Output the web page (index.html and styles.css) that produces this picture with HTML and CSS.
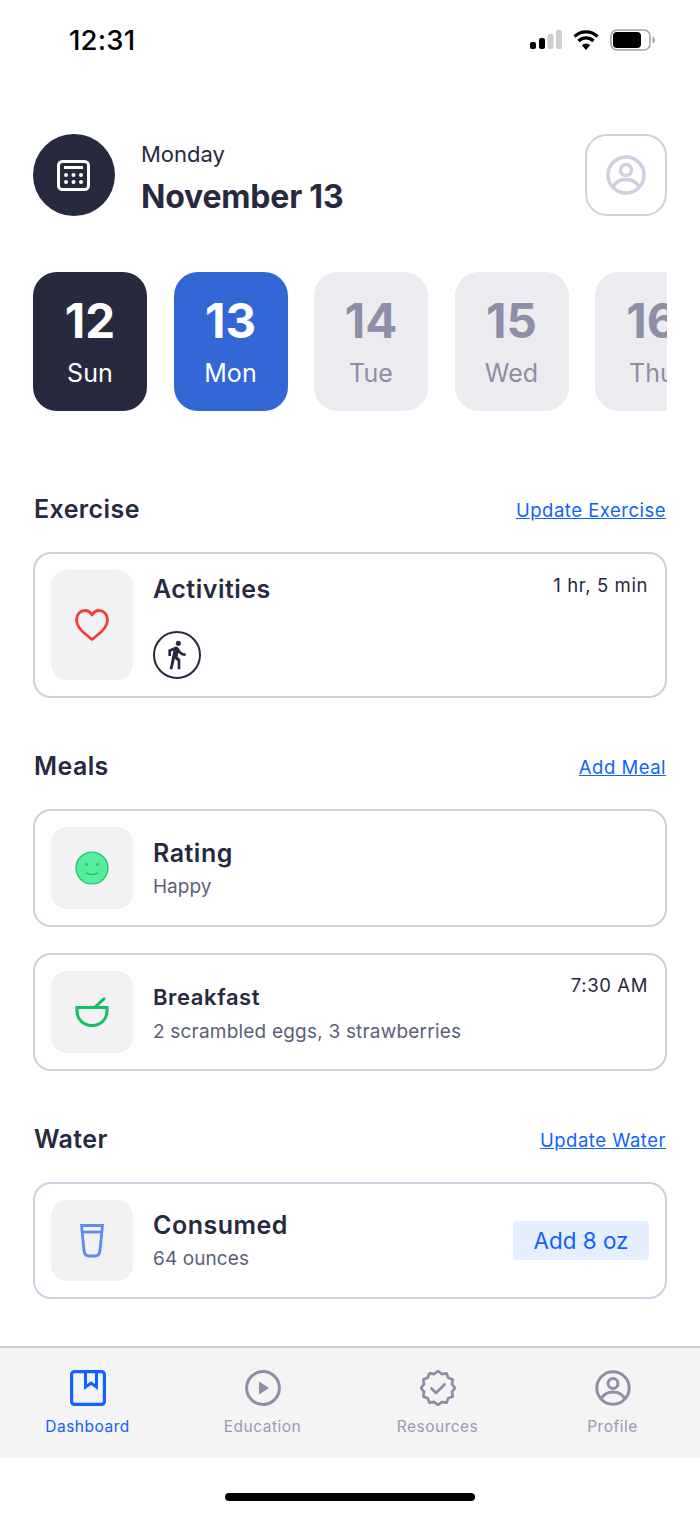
FILE: index.html
```html
<!DOCTYPE html>
<html lang="en">
<head>
<meta charset="utf-8">
<title>Dashboard</title>
<link rel="stylesheet" href="styles.css">
</head>
<body>
<div class="status">
  <span class="clock">12:31</span>
  <div class="status-icons">
    <svg class="i-signal" width="32" height="20" viewBox="0 0 32 20"><rect x="0" y="12" width="6" height="7" rx="2"/><rect x="9" y="8" width="6" height="11" rx="2"/><rect class="off" x="17.500" y="4" width="6" height="15" rx="2"/><rect class="off" x="26" y="0" width="6" height="19" rx="2"/></svg>
    <svg class="i-wifi" width="26" height="20" viewBox="0 0 26 20"><path d="M1.500 6.500a16.500 16.500 0 0 1 23 0M5.500 11a10.800 10.800 0 0 1 15 0" fill="none" stroke="#000" stroke-width="3.200"/><path d="M13 20 8.800 15.300a6 6 0 0 1 8.400 0z"/></svg>
    <svg class="i-battery" width="45" height="22" viewBox="0 0 45 22"><rect x="1" y="1" width="39" height="20" rx="6" fill="none" stroke="#a4a4a4" stroke-width="1.600"/><rect x="3" y="3" width="28" height="16" rx="4"/><path d="M42.500 7.500c1.500.5 2.500 2 2.500 3.500s-1 3-2.500 3.500z" fill="#a4a4a4"/></svg>
  </div>
</div>

<main class="main">
  <header class="top">
    <div class="round-icon">
      <svg width="36" height="36" viewBox="0 0 36 36" fill="none"><rect x="2.500" y="4.500" width="30" height="28" rx="4" stroke="#fff" stroke-width="3"/><rect x="8" y="9" width="19" height="3" fill="#fff"/><g fill="#fff"><circle cx="10" cy="18" r="2"/><circle cx="17.500" cy="18" r="2"/><circle cx="25" cy="18" r="2"/><circle cx="10" cy="25" r="2"/><circle cx="17.500" cy="25" r="2"/><circle cx="25" cy="25" r="2"/></g></svg>
    </div>
    <div class="top-text">
      <div class="weekday">Monday</div>
      <div class="date">November 13</div>
    </div>
    <div class="avatar-btn">
      <svg width="40" height="40" viewBox="0 0 40 40" fill="none" stroke="#cfcfe0" stroke-width="3.500"><circle cx="20" cy="20" r="18"/><circle cx="20" cy="15" r="5.500"/><path d="M7 32c2.500-5 7.500-7.500 13-7.500S30.500 27 33 32"/></svg>
    </div>
  </header>

  <div class="days">
    <div class="day day-dark"><b>12</b><span>Sun</span></div>
    <div class="day day-blue"><b>13</b><span>Mon</span></div>
    <div class="day"><b>14</b><span>Tue</span></div>
    <div class="day"><b>15</b><span>Wed</span></div>
    <div class="day"><b>16</b><span>Thu</span></div>
  </div>

  <section class="section section-first">
    <div class="sec-head"><h2>Exercise</h2><a href="#">Update Exercise</a></div>
    <div class="card">
      <div class="icon-box icon-tall">
        <svg width="36" height="34" viewBox="0 0 36 34" fill="none"><path d="M18 31.500C11 26 2.500 20 2.500 11.500 2.500 6 6.500 2.500 10.800 2.500c3 0 5.600 1.700 7.200 4.500 1.600-2.800 4.200-4.500 7.200-4.500 4.300 0 8.300 3.500 8.300 9 0 8.500-8.500 14.500-15.500 20z" stroke="#f24040" stroke-width="2.800" stroke-linejoin="round"/></svg>
      </div>
      <div class="card-body card-activities">
        <div class="title">Activities</div>
        <div class="walk">
          <svg width="26" height="30" viewBox="5 1 15 22.500" fill="#272a3e"><path d="M13.500 5.500c1.100 0 2-.9 2-2s-.9-2-2-2-2 .9-2 2 .9 2 2 2zM9.800 8.900L7 23h2.100l1.800-8 2.100 2v6h2v-7.500l-2.100-2 .6-3C14.800 12 16.800 13 19 13v-2c-1.900 0-3.500-1-4.300-2.400l-1-1.600c-.4-.6-1-1-1.700-1-.3 0-.5.1-.8.1L6 8.300V13h2V9.600l1.800-.7"/></svg>
        </div>
      </div>
      <div class="meta meta-activities">1 hr, 5 min</div>
    </div>
  </section>

  <section class="section">
    <div class="sec-head"><h2>Meals</h2><a href="#">Add Meal</a></div>
    <div class="card">
      <div class="icon-box">
        <svg width="34" height="34" viewBox="0 0 34 34"><circle cx="17" cy="17" r="16" fill="#55ec9d" stroke="#1cbc6a" stroke-width="1.200"/><circle cx="11.500" cy="13.500" r="1.300" fill="#1cbc6a"/><circle cx="22.500" cy="13.500" r="1.300" fill="#1cbc6a"/><path d="M11 22c3.500 1.800 8.500 1.800 12 0" fill="none" stroke="#1cbc6a" stroke-width="1.100" stroke-linecap="round"/></svg>
      </div>
      <div class="card-body">
        <div class="title title-rating">Rating</div>
        <div class="sub sub-rating">Happy</div>
      </div>
    </div>
    <div class="card card-next">
      <div class="icon-box">
        <svg width="34" height="30" viewBox="0 0 34 30" fill="none" stroke="#10c163" stroke-width="3"><path d="M2 10.500h30V14c0 8-6 14.500-15 14.500S2 22 2 14z"/><path d="M20 10 29 1.800" stroke-linecap="round"/></svg>
      </div>
      <div class="card-body">
        <div class="title title-small">Breakfast</div>
        <div class="sub sub-breakfast">2 scrambled eggs, 3 strawberries</div>
      </div>
      <div class="meta meta-breakfast">7:30 AM</div>
    </div>
  </section>

  <section class="section">
    <div class="sec-head"><h2>Water</h2><a href="#">Update Water</a></div>
    <div class="card card-center">
      <div class="icon-box icon-water">
        <svg width="24" height="34" viewBox="0 0 24 34" fill="none" stroke="#5b8def" stroke-width="2.800"><path d="M1.500 1.500h21l-2.500 25c-.3 3.200-2 5.500-5 5.500H9c-3 0-4.700-2.300-5-5.500z"/><path d="M2.200 8h19.600"/></svg>
      </div>
      <div class="card-body">
        <div class="title">Consumed</div>
        <div class="sub sub-water">64 ounces</div>
      </div>
      <button class="add-btn">Add 8 oz</button>
    </div>
  </section>
</main>

<nav class="tabs">
  <div class="tab tab-active">
    <svg width="36" height="36" viewBox="0 0 36 36" fill="none" stroke="#0f62fe" stroke-width="3.200"><rect x="1.600" y="1.600" width="32.800" height="32.800" rx="3"/><path d="M15.500 2v15l5.500-4 5.500 4V2" stroke-width="3"/></svg>
    <span>Dashboard</span>
  </div>
  <div class="tab">
    <svg width="36" height="36" viewBox="0 0 36 36" fill="none"><circle cx="18" cy="18" r="16.400" stroke="#8e8ea6" stroke-width="3"/><path d="M14 11.500v13l10-6.500z" fill="#8e8ea6"/></svg>
    <span>Education</span>
  </div>
  <div class="tab">
    <svg width="36" height="36" viewBox="0 0 36 36" fill="none" stroke="#8e8ea6" stroke-width="2.800" stroke-linejoin="round"><path d="M35 18 32 21.750 32.700 26.500 28.250 28.250 26.500 32.700 21.750 32 18 35 14.250 32 9.500 32.700 7.750 28.250 3.300 26.500 4 21.750 1 18 4 14.250 3.300 9.500 7.750 7.750 9.500 3.300 14.250 4 18 1 21.750 4 26.500 3.300 28.250 7.750 32.700 9.500 32 14.250z"/><path d="M11.500 18.500l4.500 4.500 8.500-8.500" stroke-linecap="round"/></svg>
    <span>Resources</span>
  </div>
  <div class="tab">
    <svg width="36" height="36" viewBox="0 0 40 40" fill="none" stroke="#8e8ea6" stroke-width="3.300"><circle cx="20" cy="20" r="18"/><circle cx="20" cy="15" r="5.500"/><path d="M7 32c2.500-5 7.500-7.500 13-7.500S30.500 27 33 32"/></svg>
    <span>Profile</span>
  </div>
</nav>
<div class="home"><div class="home-bar"></div></div>
</body>
</html>
```

FILE: styles.css
```css
* { box-sizing: border-box; }
html, body { margin: 0; padding: 0; }
body {
  width: 700px;
  height: 1517px;
  overflow: hidden;
  display: flex;
  flex-direction: column;
  background: #fff;
  color: #272a3e;
  font-family: Inter, "Liberation Sans", sans-serif;
}

.status {
  height: 80px;
  flex: none;
  display: flex;
  align-items: center;
  justify-content: space-between;
  padding: 0 45px 0 69px;
  color: #000;
}
.clock { font-size: 27.500px; font-weight: 500; letter-spacing: .2px; }
.status-icons { display: flex; align-items: center; gap: 11px; }
.status-icons svg { display: block; }
.off { fill: #cfcfcf; }

.main { flex: 1; padding: 54px 33px 0; min-height: 0; }

.top { display: flex; align-items: center; height: 82px; }
.round-icon {
  width: 82px; height: 82px; border-radius: 50%;
  background: #272a3e;
  display: flex; align-items: center; justify-content: center;
}
.top-text { flex: 1; margin-left: 26px; padding-top: 6px; }
.weekday { font-size: 22px; line-height: 28px; }
.date { font-size: 32px; font-weight: 700; line-height: 38px; margin-top: 10px; letter-spacing: -.2px; }
.avatar-btn {
  width: 82px; height: 82px; border-radius: 22px;
  border: 2px solid #cfcfe0;
  display: flex; align-items: center; justify-content: center;
}

.days { display: flex; gap: 26.500px; margin-top: 56px; overflow: hidden; }
.day {
  flex: none; width: 114px; height: 139px; border-radius: 24px;
  background: #ebebf0; color: #8e8ea6;
  display: flex; flex-direction: column; align-items: center;
  padding-top: 21px;
}
.day b { font-size: 47.500px; line-height: 56px; font-weight: 700; }
.day span { font-size: 25px; line-height: 32px; margin-top: 8px; letter-spacing: .1px; }
.day-dark { background: #272a3e; color: #fff; }
.day-blue { background: #3367d6; color: #fff; }

.section { margin-top: 53px; }
.section-first { margin-top: 83px; }
.sec-head { height: 30px; display: flex; align-items: center; justify-content: space-between; margin-bottom: 28px; }
.sec-head h2 { margin: 0 0 0 1px; font-size: 25px; font-weight: 600; letter-spacing: .4px; }
.sec-head a { color: #0f62fe; font-size: 18.500px; padding: 1px 1px 0 0; letter-spacing: .5px; }

.card {
  border: 2px solid #cfcfe0; border-radius: 18px;
  padding: 16px;
  display: flex;
}
.card-next { margin-top: 26px; }
.card-center { align-items: center; }
.icon-box {
  flex: none; width: 82px; height: 82px; border-radius: 16px;
  background: #f2f2f5;
  display: flex; align-items: center; justify-content: center;
}
.icon-tall { height: 110px; }
.icon-water { height: 81px; }
.card-body { flex: 1; margin-left: 20px; }
.title { font-size: 25px; font-weight: 600; line-height: 30px; letter-spacing: .5px; }
.title-rating { margin-top: 11px; }
.title-small { font-size: 22px; margin-top: 11px; letter-spacing: .6px; }
.card-activities .title { margin-top: 4px; }
.sub { font-size: 19px; line-height: 24px; color: #5c5f77; }
.sub-rating { margin-top: 7px; }
.sub-breakfast { margin-top: 8px; letter-spacing: .2px; }
.sub-water { margin-top: 7px; letter-spacing: .1px; }
.meta { font-size: 18.500px; line-height: 24px; letter-spacing: .6px; margin-right: 1px; }
.meta-activities { margin-top: 3px; }
.meta-breakfast { margin-top: 2px; }
.walk {
  width: 48px; height: 48px; border-radius: 50%;
  border: 2px solid #272a3e; margin-top: 27px;
  display: flex; align-items: center; justify-content: center;
}
.add-btn {
  border: 0; background: #e5efff; color: #0f62fe;
  font: 400 22.400px Inter, sans-serif;
  width: 136px; height: 39px; border-radius: 4px; padding: 0;
}

.tabs {
  flex: none; height: 112px;
  border-top: 2px solid #c9c9c9;
  background: #f4f4f5;
  display: grid; grid-template-columns: repeat(4, 1fr);
}
.tab {
  display: flex; flex-direction: column; align-items: center;
  padding-top: 22px; color: #9a9ab0;
  font-size: 15.500px; letter-spacing: .5px;
}
.tab svg { display: block; }
.tab span { margin-top: 11px; line-height: 20px; }
.tab-active { color: #0f62fe; }

.home { flex: none; height: 59px; padding-top: 35px; display: flex; justify-content: center; }
.home-bar { width: 250px; height: 8px; border-radius: 4px; background: #000; }
```
